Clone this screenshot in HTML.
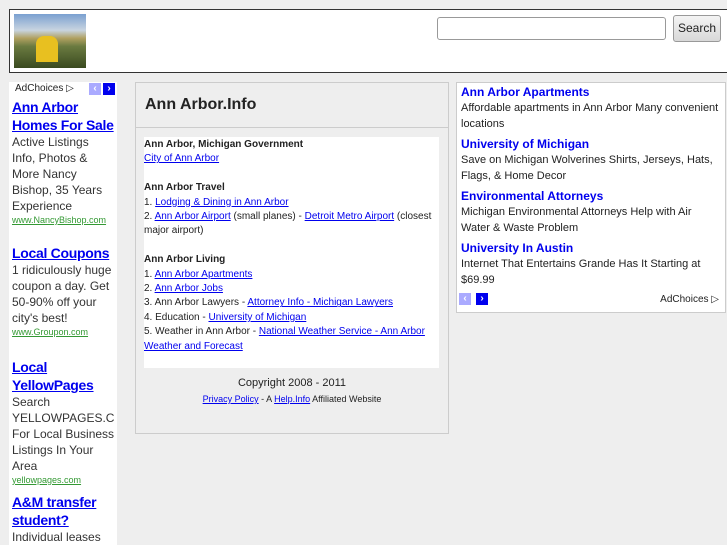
<!DOCTYPE html>
<html><head><meta charset="utf-8"><style>
*{margin:0;padding:0;box-sizing:border-box}
body{width:727px;height:545px;overflow:hidden;background:#eee;font-family:"Liberation Sans",sans-serif;position:relative;color:#222}
a{color:#00e}
.hdr{position:absolute;left:9px;top:9px;width:720px;height:64px;background:#fff;border:1px solid #333}
.img{position:absolute;left:4px;top:4px;width:72px;height:54px;background:linear-gradient(#7aa0d0 0,#c8d4e0 30%,#b0a060 45%,#6a7a40 60%,#3a4a20 100%)}
.fig{position:absolute;left:22px;top:22px;width:22px;height:26px;background:#e8c020;border-radius:8px 8px 0 0}
.inp{position:absolute;left:427px;top:7px;width:229px;height:23px;border:1px solid #999;border-radius:3px;background:#fff}
.btn{position:absolute;left:663px;top:5px;width:48px;height:27px;border:1px solid #999;border-radius:3px;background:linear-gradient(#f4f4f4,#d8d8d8);font-size:12px;text-align:center;line-height:25px;color:#222}
.lad{position:absolute;left:9px;top:82px;width:108px;height:463px;background:#fff;padding:0 0 0 3px;overflow:hidden}
.lad .t{font-size:14px;font-weight:bold;line-height:18px;display:block;margin-top:0;white-space:nowrap;letter-spacing:-0.3px}
.lad .d{font-size:12px;line-height:16px;color:#333;white-space:nowrap}
.lad .u{font-size:9px;color:#393;line-height:13px;display:block}
.ac{font-size:10px;color:#222;position:absolute}
.arr{position:absolute;width:12px;height:12px;color:#fff;font-size:10px;font-weight:bold;text-align:center;line-height:12px}
.main{position:absolute;left:135px;top:82px;width:314px;height:352px;border:1px solid #ccc;background:#eee}
.main h1{font-size:16px;font-weight:bold;padding:13px 0 0 9px;height:45px;border-bottom:1px solid #ccc;color:#222}
.cnt{position:absolute;left:8px;top:54px;width:295px;height:231px;background:#fff;font-size:10px;line-height:14.4px;padding-top:1px;color:#222}
.cnt b{font-weight:bold}
.foot{position:absolute;left:0;width:100%;text-align:center;color:#222}
.rad{position:absolute;left:456px;top:82px;width:270px;height:231px;background:#fff;border:1px solid #ccc;padding:1px 2px 0 4px}
.rad .t{font-size:12px;font-weight:bold;color:#00e;text-decoration:none;display:block;line-height:16px}
.rad .d{font-size:11px;line-height:16px;color:#222;margin-bottom:4px;white-space:nowrap}
</style></head><body>
<div class="hdr"><div class="img"><div class="fig"></div></div><div class="inp"></div><div class="btn">Search</div></div>

<div class="lad">
<span class="ac" style="left:6px;top:1px">AdChoices ▷</span>
<div class="arr" style="left:80px;top:1px;background:#aaf">‹</div>
<div class="arr" style="left:94px;top:1px;background:#00e">›</div>
<div style="height:16px"></div>
<a class="t" href="#">Ann Arbor<br>Homes For Sale</a>
<div class="d">Active Listings<br>Info, Photos &amp;<br>More Nancy<br>Bishop, 35 Years<br>Experience</div>
<a class="u" href="#">www.NancyBishop.com</a>
<div style="height:17px"></div>
<a class="t" href="#">Local Coupons</a>
<div class="d">1 ridiculously huge<br>coupon a day. Get<br>50-90% off your<br>city's best!</div>
<a class="u" href="#">www.Groupon.com</a>
<div style="height:19px"></div>
<a class="t" href="#">Local<br>YellowPages</a>
<div class="d">Search<br>YELLOWPAGES.C<br>For Local Business<br>Listings In Your<br>Area</div>
<a class="u" href="#">yellowpages.com</a>
<div style="height:6px"></div>
<a class="t" href="#">A&amp;M transfer<br>student?</a>
<div class="d">Individual leases</div>
</div>

<div class="main"><h1>Ann Arbor.Info</h1>
<div class="cnt">
<b>Ann Arbor, Michigan Government</b><br><a href="#">City of Ann Arbor</a><br><br>
<b>Ann Arbor Travel</b><br>1. <a href="#">Lodging &amp; Dining in Ann Arbor</a><br>2. <a href="#">Ann Arbor Airport</a> (small planes) - <a href="#">Detroit Metro Airport</a> (closest major airport)<br><br>
<b>Ann Arbor Living</b><br>1. <a href="#">Ann Arbor Apartments</a><br>2. <a href="#">Ann Arbor Jobs</a><br>3. Ann Arbor Lawyers - <a href="#">Attorney Info - Michigan Lawyers</a><br>4. Education - <a href="#">University of Michigan</a><br>5. Weather in Ann Arbor - <a href="#">National Weather Service - Ann Arbor Weather and Forecast</a>
</div>
<div class="foot" style="top:294px;font-size:11px">Copyright 2008 - 2011</div>
<div class="foot" style="top:311px;font-size:9px"><a href="#">Privacy Policy</a> - A <a href="#">Help.Info</a> Affiliated Website</div>
</div>

<div class="rad">
<a class="t" href="#">Ann Arbor Apartments</a><div class="d">Affordable apartments in Ann Arbor Many convenient<br>locations</div>
<a class="t" href="#">University of Michigan</a><div class="d">Save on Michigan Wolverines Shirts, Jerseys, Hats,<br>Flags, &amp; Home Decor</div>
<a class="t" href="#">Environmental Attorneys</a><div class="d">Michigan Environmental Attorneys Help with Air<br>Water &amp; Waste Problem</div>
<a class="t" href="#">University In Austin</a><div class="d">Internet That Entertains Grande Has It Starting at<br>$69.99</div>
<div class="arr" style="left:2px;top:210px;background:#aaf">‹</div>
<div class="arr" style="left:19px;top:210px;background:#00e">›</div>
<span class="ac" style="right:6px;top:211px">AdChoices ▷</span>
</div>
</body></html>
